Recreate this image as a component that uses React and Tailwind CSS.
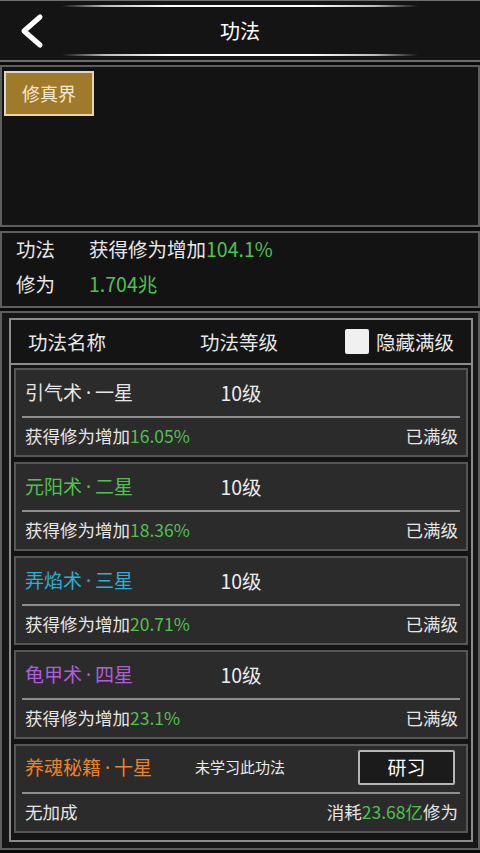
import React from "react";

const font = { fontFamily: '"Noto Sans CJK SC", "Noto Sans", sans-serif' };
const latin = { fontFamily: '"Noto Sans", sans-serif' };

const skills = [
  { name: "引气术", star: "一星", color: "text-[#e6e6e6]", level: "10级", gain: "16.05%" },
  { name: "元阳术", star: "二星", color: "text-[#4fc24f]", level: "10级", gain: "18.36%" },
  { name: "弄焰术", star: "三星", color: "text-[#2eaed6]", level: "10级", gain: "20.71%" },
  { name: "龟甲术", star: "四星", color: "text-[#b05ddc]", level: "10级", gain: "23.1%" },
];

const Title = ({ name, star, color }) => (
  <span className={`text-[19px] ${color}`}>
    {name}
    <span style={latin} className="px-[4px]">·</span>
    {star}
  </span>
);

const SkillCard = ({ s }) => (
  <div className="h-[89px] border-2 border-[#565656] bg-[#2b2b2b] flex flex-col">
    <div className="h-[46px] grid grid-cols-[1fr_auto_1fr] items-center px-[9px]">
      <Title name={s.name} star={s.star} color={s.color} />
      <span className="text-[19.5px] text-[#ececec] w-[120px] text-center">{s.level}</span>
      <span />
    </div>
    <div className="mx-[6px] h-[2px] bg-[#8c8c8c]" />
    <div className="flex-1 flex items-center justify-between pl-[9px] pr-[8px] text-[17.5px] text-[#e6e6e6]">
      <span>
        获得修为增加<span className="text-[#4fc24f]">{s.gain}</span>
      </span>
      <span>已满级</span>
    </div>
  </div>
);

const GlowLine = () => (
  <div className="mx-[62px] h-[2px] bg-[linear-gradient(90deg,transparent,#bbbbbb_12%,#ffffff_30%,#ffffff_70%,#bbbbbb_88%,transparent)]" />
);

const App = () => {
  return (
    <div style={font} className="w-[480px] h-[853px] overflow-hidden bg-[#0b0b0b] flex flex-col gap-[3px] text-[#e8e8e8]">
      {/* top bar */}
      <div className="h-[62px] shrink-0 bg-[#141414] border-t border-b-2 border-[#6e6e6e] flex flex-col justify-between pt-[4px] pb-[4px]">
        <GlowLine />
        <div className="relative flex items-center justify-center">
          <svg className="absolute left-[18px]" width="28" height="36" viewBox="0 0 28 36">
            <polyline points="22,4 6,18 22,32" fill="none" stroke="#fff" strokeWidth="5" strokeLinecap="round" strokeLinejoin="round" />
          </svg>
          <span className="text-[20px] text-white">功法</span>
        </div>
        <GlowLine />
      </div>

      {/* realm tabs */}
      <div className="h-[162px] shrink-0 bg-[#131313] border-2 border-[#5e5e5e] px-[2px] pt-[4px]">
        <div className="w-[90px] h-[45px] bg-[#a07a2b] border-2 border-[#e2d6b4] flex items-center justify-center text-[18px] text-[#f3ead2]">
          修真界
        </div>
      </div>

      {/* summary */}
      <div className="h-[77px] shrink-0 bg-[#131313] border-2 border-[#5e5e5e] flex flex-col justify-center gap-[9px] pl-[14px] pb-[6px] text-[19.5px] leading-[26px] mt-[1px]">
        <div className="flex">
          <span className="w-[73px]">功法</span>
          <span>
            获得修为增加<span className="text-[#4fc24f]">104.1%</span>
          </span>
        </div>
        <div className="flex">
          <span className="w-[73px]">修为</span>
          <span className="text-[#4fc24f]">1.704兆</span>
        </div>
      </div>

      {/* skill list */}
      <div className="flex-1 bg-[#171717] border-2 border-[#5e5e5e] pl-[7px] pr-[5px] pt-[5px] pb-[6px] mb-[3px]">
        <div className="h-full border-2 border-[#8c8c8c] bg-[#141414] flex flex-col">
          <div className="h-[45px] shrink-0 border-b-2 border-[#8c8c8c] grid grid-cols-[1fr_auto_1fr] items-center pl-[17px] pr-[17px] text-[19.5px]">
            <span>功法名称</span>
            <span className="w-[124px] text-center pr-[4px]">功法等级</span>
            <div className="flex items-center justify-end gap-[7px]">
              <span className="w-[24px] h-[25px] bg-[#f0f0f0] rounded-[2px]" />
              <span>隐藏满级</span>
            </div>
          </div>

          <div className="flex flex-col gap-[5px] px-[3px] pt-[3px]">
            {skills.map((s) => (
              <SkillCard key={s.name} s={s} />
            ))}

            <div className="h-[89px] border-2 border-[#565656] bg-[#2b2b2b] flex flex-col">
              <div className="h-[46px] grid grid-cols-[1fr_auto_1fr] items-center pl-[9px] pr-[11px] pb-[3px]">
                <Title name="养魂秘籍" star="十星" color="text-[#e8832b]" />
                <span className="text-[15px] text-[#ececec] w-[120px] text-center">未学习此功法</span>
                <div className="flex justify-end">
                  <div className="w-[97px] h-[35px] bg-[#1b1b1b] border-2 border-[#b5b5b5] rounded-[2px] flex items-center justify-center text-[19px] text-white">
                    研习
                  </div>
                </div>
              </div>
              <div className="mx-[6px] h-[2px] bg-[#8c8c8c]" />
              <div className="flex-1 flex items-center justify-between pl-[9px] pr-[8px] text-[17.5px] text-[#e6e6e6]">
                <span>无加成</span>
                <span>
                  消耗<span className="text-[#4fc24f]">23.68亿</span>修为
                </span>
              </div>
            </div>
          </div>
        </div>
      </div>
    </div>
  );
};

export default App;
